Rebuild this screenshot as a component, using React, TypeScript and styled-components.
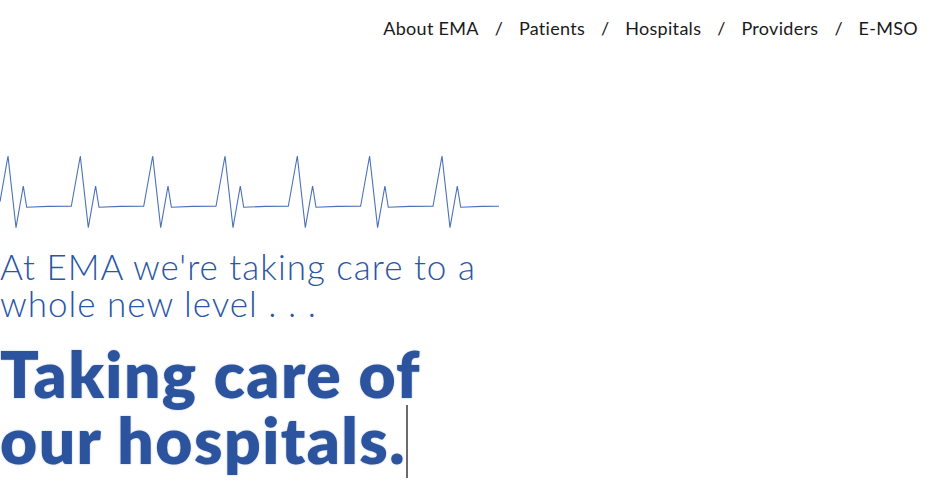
import React from "react";
import styled, { createGlobalStyle } from "styled-components";

const Global = createGlobalStyle`
  html, body { margin: 0; padding: 0; background: #fff; }
  body { font-family: "Lato", "Liberation Sans", sans-serif; }
`;

const Page = styled.div`
  width: 942px;
  min-height: 485px;
  display: flex;
  flex-direction: column;
  overflow: hidden;
`;

const Nav = styled.nav`
  display: flex;
  justify-content: flex-end;
  align-items: center;
  padding: 17px 24px 0 0;
  height: 22px;
  gap: 16px;
`;

const NavLink = styled.a`
  font-family: "Lato", sans-serif;
  font-size: 18px;
  color: #1a1a1a;
  text-decoration: none;
  letter-spacing: 0.3px;
`;

const Sep = styled.span`
  font-family: "Lato", sans-serif;
  font-size: 18px;
  color: #1a1a1a;
`;

const Hero = styled.section`
  display: flex;
  flex-direction: column;
  padding-top: 111px;
`;

const Ecg = styled.svg`
  display: block;
  width: 500px;
  height: 82px;
`;

const Lead = styled.p`
  margin: 16px 0 0 0;
  font-family: "Lato", sans-serif;
  font-weight: 300;
  font-size: 35px;
  line-height: 37px;
  color: #2a56a6;
  width: 500px;
  letter-spacing: 1px;
`;

const Headline = styled.h1`
  margin: 21px 0 0 0;
  font-family: "Lato", sans-serif;
  font-weight: 800;
  font-size: 64px;
  line-height: 62px;
  color: #2c539e;
  text-shadow: 0 0 2px rgba(30, 70, 150, 0.35);
  width: 460px;
  letter-spacing: 1.45px;
`;

const Cursor = styled.span`
  display: inline-block;
  width: 2px;
  height: 73px;
  background: #6b6b6b;
  vertical-align: -14px;
  margin-left: 0;
`;

const buildPath = () => {
  const peaks = [0, 1, 2, 3, 4, 5, 6].map((k) => 8 + 72.33 * k);
  let d = "M0 51.7";
  peaks.forEach((p, i) => {
    if (i > 0) d += ` L${(p - 9).toFixed(1)} 56.3`;
    d += ` L${p.toFixed(1)} 6 L${(p + 8).toFixed(1)} 77.7 L${(p + 15.3).toFixed(
      1
    )} 36 L${(p + 18.7).toFixed(1)} 57.3 L${(p + 40).toFixed(1)} 56.4`;
  });
  d += " L499 56.3";
  return d;
};

export default function App() {
  const items = ["About EMA", "Patients", "Hospitals", "Providers", "E-MSO"];
  return (
    <Page>
      <Global />
      <Nav>
        {items.map((t, i) => (
          <React.Fragment key={t}>
            {i > 0 && <Sep>/</Sep>}
            <NavLink href="#">{t}</NavLink>
          </React.Fragment>
        ))}
      </Nav>
      <Hero>
        <Ecg viewBox="0 0 500 82">
          <path d={buildPath()} fill="none" stroke="#4a70b8" strokeWidth="1.1" strokeLinejoin="miter" />
        </Ecg>
        <Lead>At EMA we're taking care to a whole new level . . .</Lead>
        <Headline>
          Taking care of our hospitals.
          <Cursor />
        </Headline>
      </Hero>
    </Page>
  );
}
